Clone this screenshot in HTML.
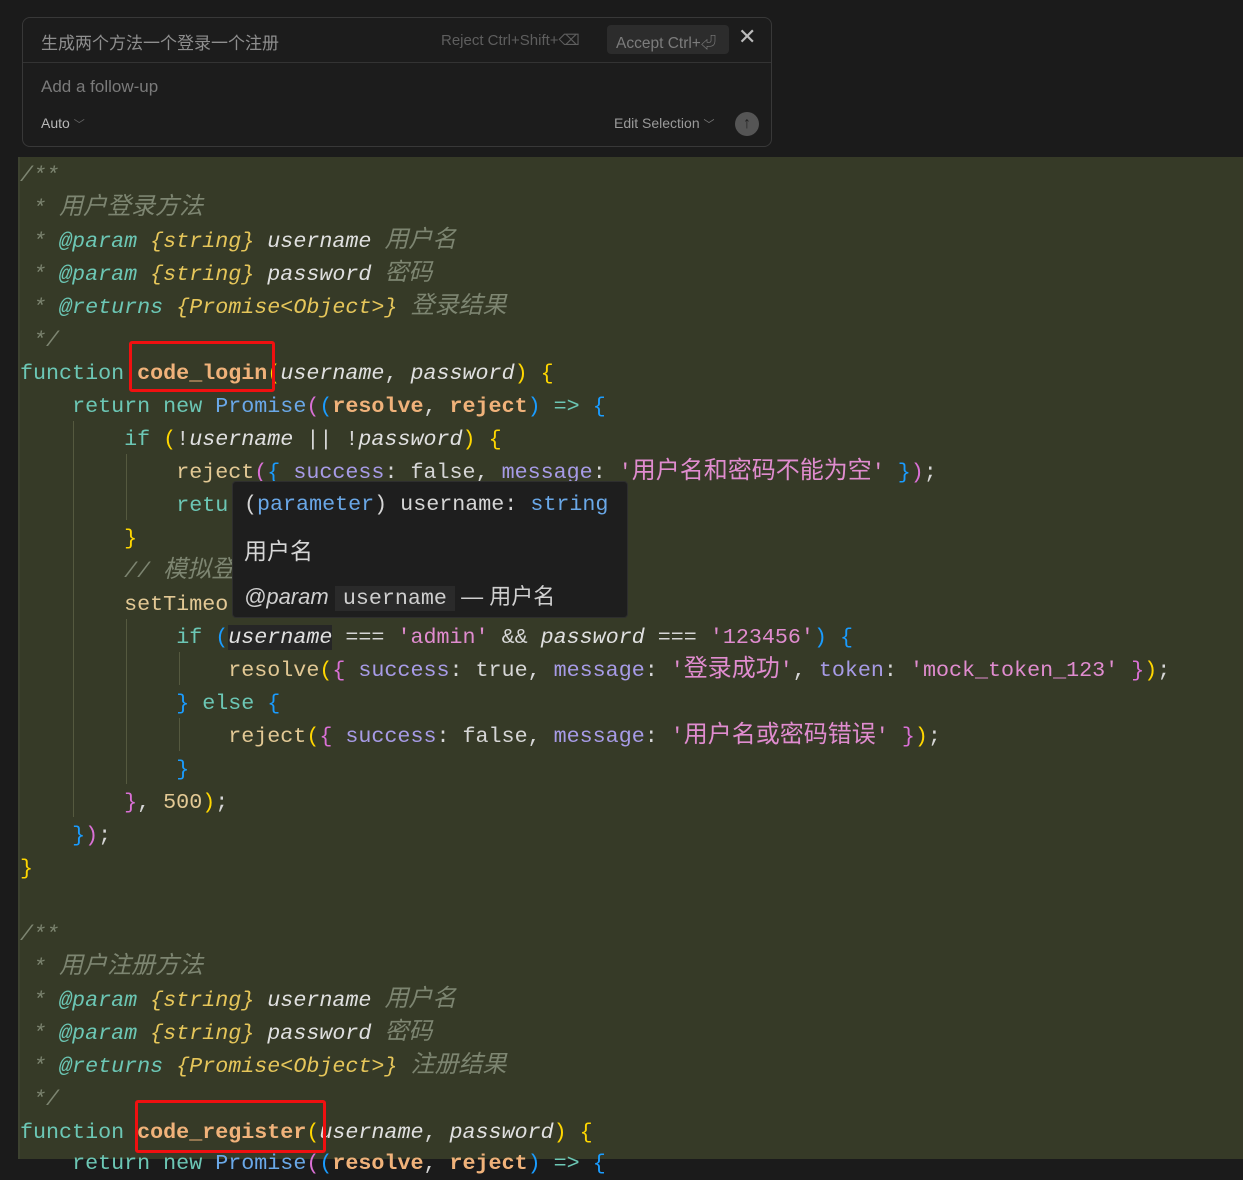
<!DOCTYPE html>
<html><head><meta charset="utf-8"><style>
*{margin:0;padding:0;box-sizing:border-box}
body{width:1243px;height:1159px;background:#1b1b1b;position:relative;overflow:hidden;font-family:"Liberation Sans","Noto Sans CJK SC",sans-serif}
.panel{position:absolute;left:22px;top:17px;width:750px;height:130px;background:#1c1c1c;border:1px solid #383838;border-radius:8px}
.sep{position:absolute;left:0;right:0;top:44px;border-top:1px solid #333}
.t{position:absolute;color:#8a8a8a;white-space:nowrap}
.code{position:absolute;left:18px;top:157px;width:1225px;height:1002px;background:#363a27}
.ln{position:absolute;left:20px;height:33px;line-height:33px;white-space:pre;font-family:"Liberation Mono","Noto Sans CJK SC",monospace;font-size:21.7px;color:#d6d6d6;margin-top:2px}
.cj{font-size:24px;line-height:20px;font-family:"Noto Sans CJK SC",sans-serif}
.c{color:#7d8571;font-style:italic}
.k{color:#6cc7b5}
.ty{color:#e6c65a}
.fn{color:#f0b27a;font-weight:bold}
.i{font-style:italic;color:#e0e0e0}
.b{color:#6aa8e8}
.y{color:#ffd700}.p{color:#da70d6}.bl{color:#1a9cff}
.f{color:#e3c995}
.pr{color:#a79be6}
.s{color:#e08ccf}
.g{position:absolute;width:1px;background:#55593f}
.red{position:absolute;border:3px solid #f01010;border-radius:3px}
.tip{position:absolute;left:232px;top:481px;width:396px;height:137px;background:#1e1e1e;border:1px solid #2e2e2e;border-radius:4px}
</style></head><body>
<div class="panel">
<div class="t" style="left:18px;top:11px;font-size:17px;color:#8e8e8e">生成两个方法一个登录一个注册</div>
<div class="t" style="left:418px;top:13px;font-size:15px;color:#5e5e5e">Reject Ctrl+Shift+⌫</div>
<div style="position:absolute;left:584px;top:7px;width:122px;height:29px;background:#2c2c2c;border-radius:4px"></div>
<div class="t" style="left:593px;top:13px;font-size:15.5px;color:#7c7c7c">Accept Ctrl+⏎</div>
<div class="t" style="left:715px;top:6px;font-size:22px;color:#bbb">✕</div>
<div class="sep"></div>
<div class="t" style="left:18px;top:59px;font-size:17px;color:#7a7a7a">Add a follow-up</div>
<div class="t" style="left:18px;top:97px;font-size:14px;color:#b8b8b8">Auto <span style="color:#666;font-size:11px">﹀</span></div>
<div class="t" style="left:591px;top:97px;font-size:14px;color:#9a9a9a">Edit Selection <span style="color:#777;font-size:11px">﹀</span></div>
<div style="position:absolute;left:712px;top:94px;width:24px;height:24px;border-radius:50%;background:#555;color:#222;font-size:16px;text-align:center;line-height:24px">↑</div>
</div>
<div class="code"></div>
<div style="position:absolute;left:18px;top:157px;width:2px;height:1002px;background:#3d4230"></div>
<div class="g" style="left:73px;top:421px;height:396px"></div>
<div class="g" style="left:126px;top:454px;height:66px"></div>
<div class="g" style="left:126px;top:619px;height:165px"></div>
<div class="g" style="left:179px;top:652px;height:33px"></div>
<div class="g" style="left:179px;top:718px;height:33px"></div>

<div class="ln c" style="top:157px">/**</div>
<div class="ln c" style="top:190px"> * <span class="cj">用户登录方法</span></div>
<div class="ln c" style="top:223px"> * <span class="k">@param</span> <span class="ty">{string}</span> <span class="i">username</span> <span class="cj">用户名</span></div>
<div class="ln c" style="top:256px"> * <span class="k">@param</span> <span class="ty">{string}</span> <span class="i">password</span> <span class="cj">密码</span></div>
<div class="ln c" style="top:289px"> * <span class="k">@returns</span> <span class="ty">{Promise&lt;Object&gt;}</span> <span class="cj">登录结果</span></div>
<div class="ln c" style="top:322px"> */</div>
<div class="ln" style="top:355px"><span class="k">function</span> <span class="fn">code_login</span><span class="y">(</span><span class="i">username</span>, <span class="i">password</span><span class="y">)</span> <span class="y">{</span></div>
<div class="ln" style="top:388px">    <span class="k">return</span> <span class="k">new</span> <span class="b">Promise</span><span class="p">(</span><span class="bl">(</span><span class="fn">resolve</span>, <span class="fn">reject</span><span class="bl">)</span> <span class="k">=&gt;</span> <span class="bl">{</span></div>
<div class="ln" style="top:421px">        <span class="k">if</span> <span class="y">(</span>!<span class="i">username</span> || !<span class="i">password</span><span class="y">)</span> <span class="y">{</span></div>
<div class="ln" style="top:454px">            <span class="f">reject</span><span class="p">(</span><span class="bl">{</span> <span class="pr">success</span>: false, <span class="pr">message</span>: <span class="s">'<span class="cj">用户名和密码不能为空</span>'</span> <span class="bl">}</span><span class="p">)</span>;</div>
<div class="ln" style="top:487px">            <span class="k">retu</span></div>
<div class="ln" style="top:520px">        <span class="y">}</span></div>
<div class="ln c" style="top:553px">        // <span class="cj">模拟登</span></div>
<div class="ln" style="top:586px">        <span class="f">setTimeo</span></div>
<div class="ln" style="top:619px">            <span class="k">if</span> <span class="bl">(</span><span class="i" style="background:#262626">username</span> === <span class="s">'admin'</span> &amp;&amp; <span class="i">password</span> === <span class="s">'123456'</span><span class="bl">)</span> <span class="bl">{</span></div>
<div class="ln" style="top:652px">                <span class="f">resolve</span><span class="y">(</span><span class="p">{</span> <span class="pr">success</span>: true, <span class="pr">message</span>: <span class="s">'<span class="cj">登录成功</span>'</span>, <span class="pr">token</span>: <span class="s">'mock_token_123'</span> <span class="p">}</span><span class="y">)</span>;</div>
<div class="ln" style="top:685px">            <span class="bl">}</span> <span class="k">else</span> <span class="bl">{</span></div>
<div class="ln" style="top:718px">                <span class="f">reject</span><span class="y">(</span><span class="p">{</span> <span class="pr">success</span>: false, <span class="pr">message</span>: <span class="s">'<span class="cj">用户名或密码错误</span>'</span> <span class="p">}</span><span class="y">)</span>;</div>
<div class="ln" style="top:751px">            <span class="bl">}</span></div>
<div class="ln" style="top:784px">        <span class="p">}</span>, <span class="f">500</span><span class="y">)</span>;</div>
<div class="ln" style="top:817px">    <span class="bl">}</span><span class="p">)</span>;</div>
<div class="ln" style="top:850px"><span class="y">}</span></div>
<div class="ln c" style="top:916px">/**</div>
<div class="ln c" style="top:949px"> * <span class="cj">用户注册方法</span></div>
<div class="ln c" style="top:982px"> * <span class="k">@param</span> <span class="ty">{string}</span> <span class="i">username</span> <span class="cj">用户名</span></div>
<div class="ln c" style="top:1015px"> * <span class="k">@param</span> <span class="ty">{string}</span> <span class="i">password</span> <span class="cj">密码</span></div>
<div class="ln c" style="top:1048px"> * <span class="k">@returns</span> <span class="ty">{Promise&lt;Object&gt;}</span> <span class="cj">注册结果</span></div>
<div class="ln c" style="top:1081px"> */</div>
<div class="ln" style="top:1114px"><span class="k">function</span> <span class="fn">code_register</span><span class="y">(</span><span class="i">username</span>, <span class="i">password</span><span class="y">)</span> <span class="y">{</span></div>
<div class="ln" style="top:1145px">    <span class="k">return</span> <span class="k">new</span> <span class="b">Promise</span><span class="p">(</span><span class="bl">(</span><span class="fn">resolve</span>, <span class="fn">reject</span><span class="bl">)</span> <span class="k">=&gt;</span> <span class="bl">{</span></div>

<div class="red" style="left:129px;top:341px;width:146px;height:51px"></div>
<div class="red" style="left:135px;top:1100px;width:191px;height:53px"></div>

<div class="tip">
<div class="ln" style="left:11px;top:4px">(<span class="b">parameter</span>) username: <span class="b">string</span></div>
<div style="position:absolute;left:11px;top:50px;font-size:23px;color:#d6d6d6;font-family:'Noto Sans CJK SC',sans-serif">用户名</div>
<div style="position:absolute;left:11px;top:97px;font-size:22px;color:#cfcfcf;white-space:nowrap"><i>@param</i> <span style="background:#2a2a2a;padding:0 8px;font-family:'Liberation Mono',monospace;font-size:21.7px">username</span> — <span style="font-family:'Noto Sans CJK SC',sans-serif">用户名</span></div>
</div>
</body></html>
